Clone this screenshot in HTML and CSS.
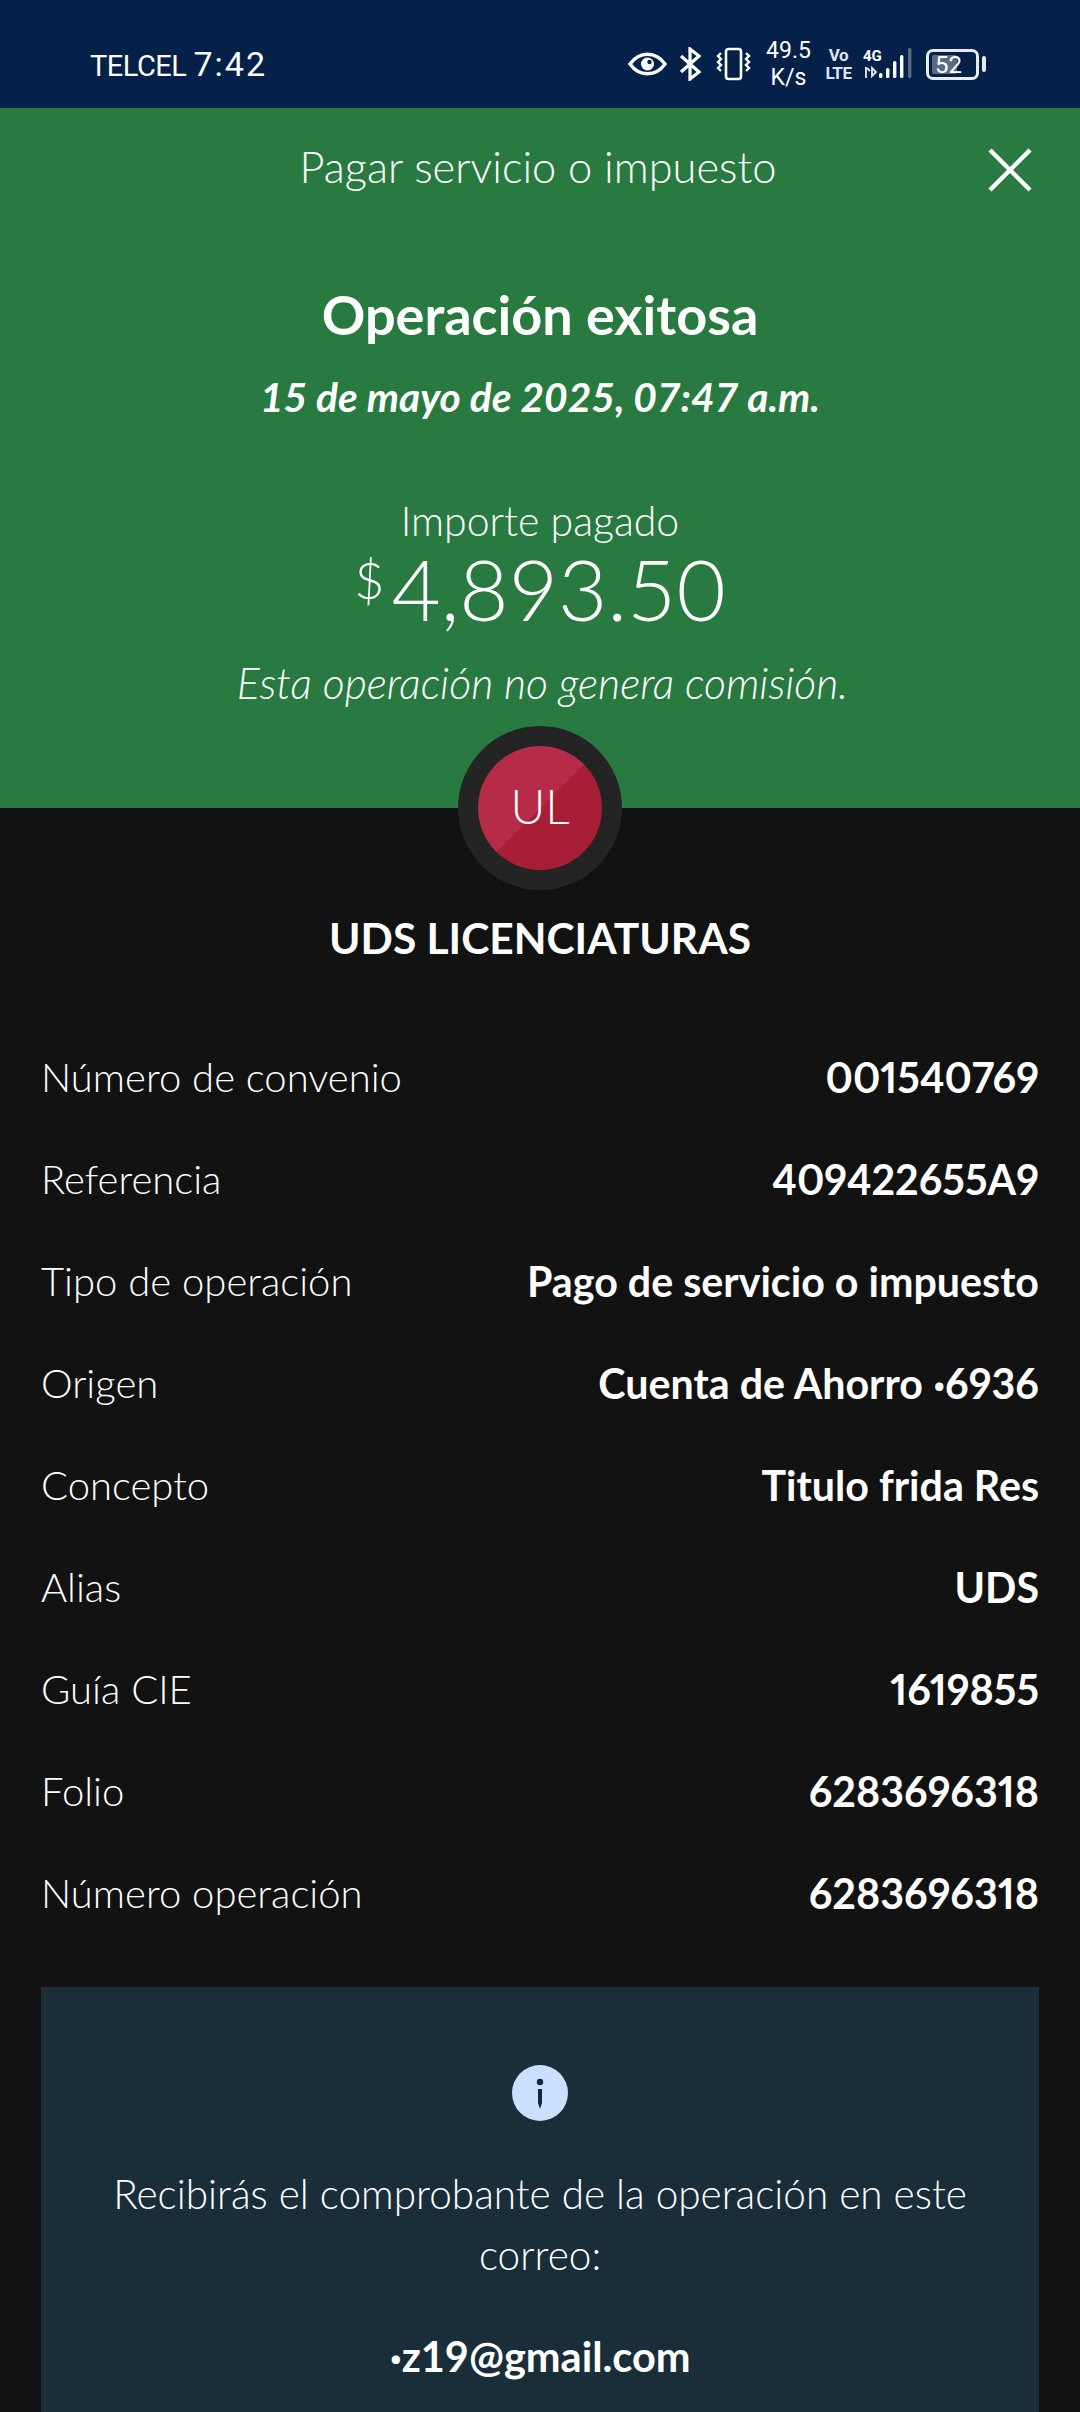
FILE: index.html
```html
<!DOCTYPE html>
<html lang="es">
<head>
    <meta charset="UTF-8">
    <meta name="viewport" content="width=device-width, initial-scale=1.0">
    <title>Pagar servicio o impuesto</title>
    <link rel="stylesheet" href="styles.css">
</head>
<body>
    <!-- Barra de estado -->
    <div class="status-bar">
        <div class="status-left">
            <span class="carrier">TELCEL</span>
            <span class="clock">7:42</span>
        </div>
        <div class="status-right">
            <svg class="ic-eye" width="39" height="24" viewBox="0 0 39 24">
                <path d="M2 12C7 5 12 2.2 19.5 2.2S32 5 37 12c-5 7-10 9.8-17.5 9.8S7 19 2 12z" fill="none" stroke="#fff" stroke-width="3.4"/>
                <circle cx="19.5" cy="12" r="6.5" fill="#fff"/>
                <circle cx="21.5" cy="10" r="2.2" fill="#05214a"/>
            </svg>
            <svg class="ic-bt" width="24" height="34" viewBox="0 0 24 34">
                <path d="M3 9l18 16-9 7V2l9 7L3 25" fill="none" stroke="#fff" stroke-width="3.2"/>
            </svg>
            <svg class="ic-vib" width="37" height="34" viewBox="0 0 37 34">
                <rect x="11" y="2" width="15" height="30" rx="2.5" fill="none" stroke="#fff" stroke-width="2.6"/>
                <path d="M6 6l-3 3 3 3-3 3 3 3-3 3 3 3M31 6l3 3-3 3 3 3-3 3 3 3-3 3" fill="none" stroke="#fff" stroke-width="2.4"/>
            </svg>
            <div class="speed"><span>49.5</span><span>K/s</span></div>
            <div class="volte"><span>Vo</span><span>LTE</span></div>
            <svg class="ic-signal" width="50" height="32" viewBox="0 0 50 32">
                <text x="0" y="13" class="net-label">4G</text>
                <path d="M3 19v11M7 23l-3-3M9 20v8l4-4z" fill="none" stroke="#e8ecf2" stroke-width="1.8"/>
                <rect x="16" y="25" width="3.4" height="5" rx="1.5" fill="#fff"/>
                <rect x="23" y="20" width="3.4" height="10" rx="1.5" fill="#fff"/>
                <rect x="30" y="13" width="3.4" height="17" rx="1.5" fill="#fff"/>
                <rect x="37" y="7" width="3.4" height="23" rx="1.5" fill="#fff"/>
                <rect x="45" y="0" width="3.4" height="30" rx="1.5" fill="#5b6b85"/>
            </svg>
            <div class="battery">
                <div class="battery-body"><span class="battery-level">52</span></div>
                <div class="battery-tip"></div>
            </div>
        </div>
    </div>

    <!-- Encabezado verde -->
    <div class="hero">
        <div class="top-bar">
            <span class="top-title">Pagar servicio o impuesto</span>
            <svg class="close" width="44" height="44" viewBox="0 0 44 44">
                <path d="M2 2l40 40M42 2L2 42" stroke="#fff" stroke-width="4.4" fill="none"/>
            </svg>
        </div>
        <h1>Operación exitosa</h1>
        <p class="date">15 de mayo de 2025, 07:47 a.m.</p>
        <p class="amount-label">Importe pagado</p>
        <p class="amount"><span class="currency">$</span>4,893.50</p>
        <p class="note">Esta operación no genera comisión.</p>
        <div class="avatar"><div class="avatar-in">UL</div></div>
    </div>

    <!-- Detalle -->
    <div class="content">
        <h2>UDS LICENCIATURAS</h2>
        <div class="rows">
            <div class="row"><span>Número de convenio</span><strong>001540769</strong></div>
            <div class="row"><span>Referencia</span><strong>409422655A9</strong></div>
            <div class="row"><span>Tipo de operación</span><strong>Pago de servicio o impuesto</strong></div>
            <div class="row"><span>Origen</span><strong>Cuenta de Ahorro <b class="dot">•</b>6936</strong></div>
            <div class="row"><span>Concepto</span><strong>Titulo frida Res</strong></div>
            <div class="row"><span>Alias</span><strong>UDS</strong></div>
            <div class="row"><span>Guía CIE</span><strong>1619855</strong></div>
            <div class="row"><span>Folio</span><strong>6283696318</strong></div>
            <div class="row"><span>Número operación</span><strong>6283696318</strong></div>
        </div>
        <div class="info-box">
            <svg class="info-icon" width="56" height="56" viewBox="0 0 56 56">
                <circle cx="28" cy="28" r="28" fill="#c9e1ff"/>
                <circle cx="28" cy="17" r="3.2" fill="#14283a"/>
                <path d="M26 24h4v14l-2 6-2-6z" fill="#14283a"/>
            </svg>
            <p class="info-text">Recibirás el comprobante de la operación en este correo:</p>
            <p class="info-mail"><b class="dot">•</b>z19@gmail.com</p>
        </div>
    </div>
</body>
</html>
```

FILE: styles.css
```css
* {
    box-sizing: border-box;
}

html, body {
    margin: 0;
    padding: 0;
}

body {
    width: 1080px;
    height: 2412px;
    overflow: hidden;
    background-color: #121212;
    color: #fff;
    font-family: "Lato", "Open Sans", sans-serif;
}

p, h1, h2 {
    margin: 0;
}

/* Barra de estado */
.status-bar {
    height: 108px;
    background-color: #05214a;
    display: flex;
    justify-content: space-between;
    align-items: center;
    padding: 20px 94px 0 90px;
}

.status-left {
    display: flex;
    align-items: baseline;
    gap: 7px;
    font-family: "Roboto", sans-serif;
}

.carrier {
    font-size: 29px;
    letter-spacing: -0.5px;
}

.clock {
    font-size: 34px;
    letter-spacing: 2px;
}

.status-right {
    display: flex;
    align-items: center;
    font-family: "Roboto", sans-serif;
}

.ic-bt {
    margin-left: 11px;
}

.ic-vib {
    margin-left: 13px;
}

.speed {
    display: flex;
    flex-direction: column;
    align-items: center;
    margin-left: 14px;
    font-size: 23px;
    line-height: 27px;
    width: 45px;
}

.volte {
    display: flex;
    flex-direction: column;
    align-items: center;
    margin-left: 13px;
    width: 29px;
    font-size: 17px;
    font-weight: 700;
    letter-spacing: -0.5px;
    line-height: 18px;
    color: #dfe4ec;
}

.ic-signal {
    margin-left: 10px;
}

.net-label {
    font-family: "Roboto", sans-serif;
    font-size: 15px;
    font-weight: 700;
    fill: #fff;
}

.battery {
    display: flex;
    align-items: center;
    margin-left: 13px;
    gap: 3px;
}

.battery-body {
    width: 53px;
    height: 31px;
    border: 3px solid #e8ecf2;
    border-radius: 7px;
    padding: 3px;
    display: flex;
}

.battery-level {
    width: 25px;
    padding-left: 3px;
    background-color: #5b6b85;
    border-radius: 2px;
    font-size: 24px;
    line-height: 20px;
    overflow: visible;
    white-space: nowrap;
}

.battery-tip {
    width: 4px;
    height: 16px;
    background-color: #e8ecf2;
    border-radius: 2px;
}

/* Encabezado verde */
.hero {
    position: relative;
    height: 700px;
    background-color: #287a41;
    text-align: center;
}

.top-bar {
    height: 120px;
    padding-top: 36px;
    line-height: 44px;
}

.top-title {
    font-size: 43.4px;
    font-weight: 300;
    margin-right: 4px;
}

.close {
    position: absolute;
    top: 40px;
    right: 48px;
}

h1 {
    margin-top: 57px;
    font-size: 54px;
    line-height: 60px;
    font-weight: 700;
}

.date {
    margin-top: 30px;
    font-size: 40.7px;
    line-height: 44px;
    font-weight: 700;
    font-style: italic;
}

.amount-label {
    margin-top: 84px;
    font-size: 41px;
    line-height: 36px;
    font-weight: 300;
}

.amount {
    font-size: 85px;
    line-height: 80px;
    font-weight: 300;
}

.currency {
    font-size: 52px;
    vertical-align: 22px;
    margin-right: 7px;
}

.note {
    margin-top: 33px;
    padding-left: 5px;
    font-size: 42.8px;
    line-height: 44px;
    font-weight: 300;
    font-style: italic;
}

/* Círculo con iniciales */
.avatar {
    position: absolute;
    left: 458px;
    top: 618px;
    width: 164px;
    height: 164px;
    border-radius: 50%;
    background-color: #242424;
    display: flex;
    align-items: center;
    justify-content: center;
}

.avatar-in {
    width: 124px;
    height: 124px;
    border-radius: 50%;
    background: linear-gradient(135deg, #b62c48 50%, #a81e36 50%);
    font-size: 48px;
    font-weight: 300;
    line-height: 120px;
}

/* Detalle */
.content {
    padding: 102px 41px 0;
}

h2 {
    text-align: center;
    font-size: 42.5px;
    line-height: 56px;
    font-weight: 700;
}

.rows {
    margin-top: 60px;
}

.row {
    height: 102px;
    display: flex;
    justify-content: space-between;
    align-items: center;
    font-size: 40px;
}

.row span {
    font-weight: 300;
}

.row strong {
    font-size: 41.2px;
    font-weight: 700;
    font-variant-numeric: proportional-nums;
}

.dot {
    font-family: "Roboto", sans-serif;
    font-size: 0.8em;
}

.info-box {
    margin-top: 43px;
    height: 500px;
    padding: 78px 40px 0;
    background-color: #1a2e3a;
    text-align: center;
}

.info-icon {
    display: block;
    margin: 0 auto;
}

.info-text {
    margin-top: 42px;
    font-size: 40.5px;
    line-height: 61px;
    font-weight: 300;
}

.info-mail {
    margin-top: 46px;
    font-size: 41.5px;
    line-height: 50px;
    font-weight: 700;
}
```
